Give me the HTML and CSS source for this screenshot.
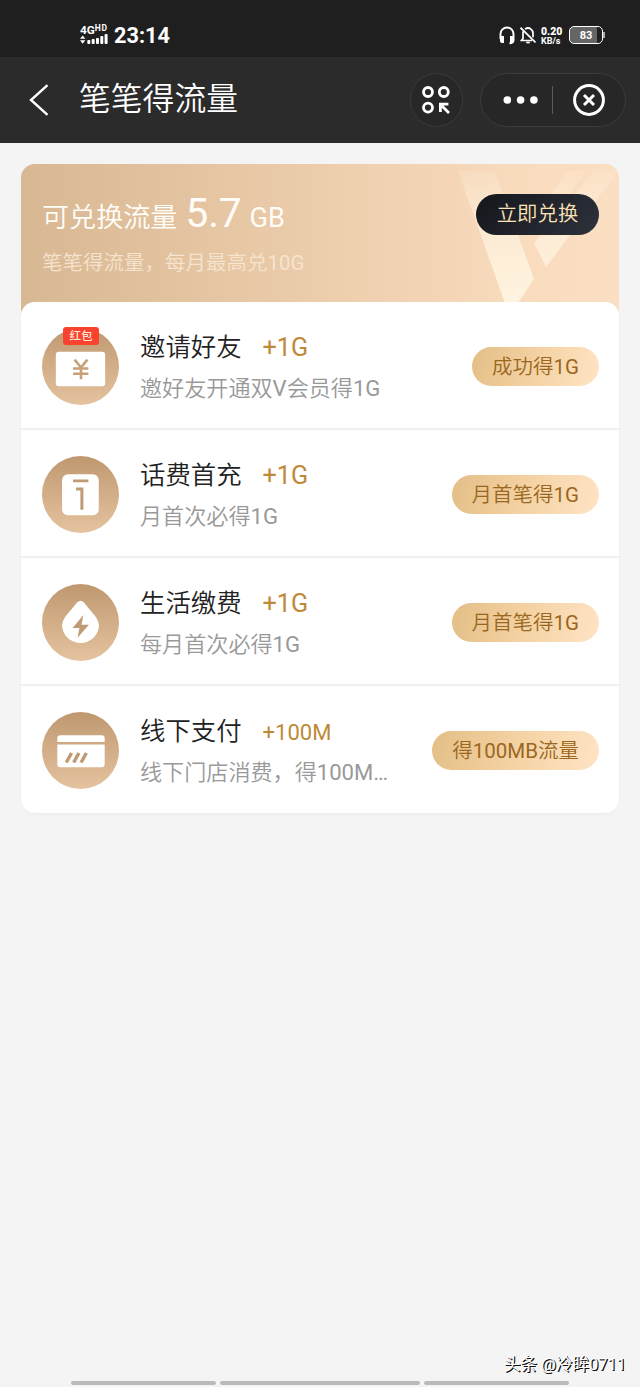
FILE: index.html
```html
<!DOCTYPE html>
<html lang="zh-CN">
<head>
<meta charset="utf-8">
<title>笔笔得流量</title>
<link rel="stylesheet" href="styles.css">
</head>
<body>
<div class="screen">
  <header class="top">
    <div class="status">
      <div class="network">
        <span class="net-type">4G<small>HD</small></span>
        <svg class="signal" width="28" height="11" viewBox="0 0 28 11" fill="#fff"><path d="M0 4.7 2.7 1.4 5.4 4.7ZM0 6.3H5.4L2.7 9.8Z"/><rect x="7.3" y="6" width="3" height="4" rx="1"/><rect x="11.7" y="5" width="3" height="5" rx="1"/><rect x="16" y="4" width="3" height="6" rx="1"/><rect x="20.3" y="2" width="3" height="8" rx="1"/><rect x="24.6" y="0" width="3" height="10" rx="1"/></svg>
      </div>
      <span class="clock">23:14</span>
      <div class="status-right">
        <svg width="16" height="19" viewBox="0 0 16 19" fill="none" stroke="#fff"><path stroke-width="2" d="M1.5 13V8A6.4 6.4 0 0 1 14.5 8V14Q14.5 17 10.5 17.3"/><path fill="#fff" stroke="none" d="M1 10H5V17H3Q1 17 1 15ZM11 10H15V15Q15 17 13 17H11Z"/></svg>
        <svg class="bell" width="16" height="19" viewBox="0 0 16 19" fill="none" stroke="#fff" stroke-width="1.7"><path d="M3 5.5V12.5L1.5 14.5H12M5 3.2Q8 .8 11 3.2Q13 4.6 13 7.5V11.2M.5 1.7 15.5 16.4"/><path d="M6.2 16.5H9.8"/></svg>
        <span class="rate"><b>0.20</b><i>KB/s</i></span>
        <div class="battery"><span>83</span></div>
      </div>
    </div>
    <nav class="navbar">
      <svg class="back" width="20" height="32" viewBox="0 0 20 32" fill="none" stroke="#fff" stroke-width="2.4"><path d="M18.5 1.2 2 16 18.5 30.8"/></svg>
      <h1 class="title">笔笔得流量</h1>
      <div class="round">
        <svg width="28" height="28" viewBox="0 0 28 28" fill="none" stroke="#fff" stroke-width="2.8"><circle cx="6" cy="6" r="4.5"/><circle cx="21.8" cy="6" r="4.5"/><circle cx="6" cy="21.6" r="4.5"/><path d="M18.4 26V18.2H26.4M19 19 27 27"/></svg>
      </div>
      <div class="capsule">
        <svg width="36" height="8" viewBox="0 0 36 8" fill="#fff"><circle cx="4.3" cy="4" r="3.8"/><circle cx="17.6" cy="4" r="3.8"/><circle cx="30.9" cy="4" r="3.8"/></svg>
        <span class="divider"></span>
        <svg width="34" height="34" viewBox="0 0 34 34" fill="none" stroke="#fff" stroke-width="3"><circle cx="17" cy="17" r="14.4"/><path d="m12 12 10 10M22 12 12 22"/></svg>
      </div>
    </nav>
  </header>

  <main class="card">
    <section class="hero">
      <svg class="emblem" width="165" height="139" viewBox="0 0 165 139">
        <defs><linearGradient id="v" x1="0" y1="0" x2="0" y2="139" gradientUnits="userSpaceOnUse"><stop stop-color="#fff3df" stop-opacity=".1"/><stop offset=".4" stop-color="#fff3df" stop-opacity=".6"/><stop offset="1" stop-color="#fff4e0"/></linearGradient></defs>
        <path fill="url(#v)" d="M4 7H41L80 115 64 139H51ZM114 7H131L95 61H74ZM140 7H164L92 103 80 79Z"/>
      </svg>
      <div class="hero-text">
        <p class="balance">可兑换流量 <strong>5.7</strong> GB</p>
        <p class="rule">笔笔得流量，每月最高兑10G</p>
      </div>
      <button class="redeem">立即兑换</button>
    </section>
    <ul class="list">
      <li class="row">
        <div class="icon">
          <svg width="78" height="78" viewBox="0 0 78 78"><rect x="14" y="24" width="50" height="35" rx="3" fill="#fff"/><path d="m33 32 6.5 8 6.5-8M39.5 39V52M31.5 41H47M31.5 46.4H47" fill="none" stroke="#c6a078" stroke-width="2.6"/></svg>
          <span class="tag">红包</span>
        </div>
        <div class="info"><p class="name">邀请好友<em>+1G</em></p><p class="desc">邀好友开通双V会员得1G</p></div>
        <button class="action">成功得1G</button>
      </li>
      <li class="row">
        <div class="icon">
          <svg width="78" height="78" viewBox="0 0 78 78"><rect x="20.3" y="18.5" width="37.2" height="41.5" rx="6" fill="#fff"/><path d="M31.5 25.2H47M34.5 33.4H40.4V54.5" fill="none" stroke="#c09a72" stroke-width="3"/></svg>
        </div>
        <div class="info"><p class="name">话费首充<em>+1G</em></p><p class="desc">月首次必得1G</p></div>
        <button class="action">月首笔得1G</button>
      </li>
      <li class="row">
        <div class="icon">
          <svg width="78" height="78" viewBox="0 0 78 78"><path d="M35.8 18.5Q39 15.2 42.2 18.5L53 31.3Q58 37.5 57.6 43A18.7 18.7 0 0 1 20.4 43Q20 37.5 25 31.3Z" fill="#fff"/><path d="M42 31.5 31 44.5H38L36 54.5 47.5 41.2H40Z" fill="#c09a72"/></svg>
        </div>
        <div class="info"><p class="name">生活缴费<em>+1G</em></p><p class="desc">每月首次必得1G</p></div>
        <button class="action">月首笔得1G</button>
      </li>
      <li class="row">
        <div class="icon">
          <svg width="78" height="78" viewBox="0 0 78 78"><path d="M15.5 30.4V26.5Q15.5 23.5 18.5 23.5H60.5Q63.5 23.5 63.5 26.5V30.4ZM15.5 33H63.5V53Q63.5 56 60.5 56H18.5Q15.5 56 15.5 53Z" fill="#fff"/><path d="M24.6 51.2 29.9 41.5M32.1 51.2 37.4 41.5M39.6 51.2 44.9 41.5" stroke="#c09a72" stroke-width="3.5"/></svg>
        </div>
        <div class="info"><p class="name">线下支付<em class="small">+100M</em></p><p class="desc">线下门店消费，得100M…</p></div>
        <button class="action">得100MB流量</button>
      </li>
    </ul>
  </main>

  <footer class="bottom">
    <p class="author">头条 @冷眸0711</p>
    <div class="handles"><span class="side"></span><span class="middle"></span><span class="side"></span></div>
  </footer>
</div>
</body>
</html>
```

FILE: styles.css
```css
* { box-sizing: border-box; }
body, h1, p, ul { margin: 0; padding: 0; }
body { background: #f4f4f4; font-family: Roboto, "Noto Sans CJK SC DemiLight", "Noto Sans CJK SC", sans-serif; }
button { border: 0; font-family: inherit; white-space: nowrap; }
svg { display: block; flex: none; }

.screen { display: flex; flex-direction: column; width: 640px; height: 1387px; overflow: hidden; }
.top { flex: none; color: #fff; }

.status { display: flex; height: 57px; padding: 23px 34px 0 80px; background: #1f1f1f; }
.network { width: 28px; margin-right: 6px; padding-top: 2px; }
.net-type { display: flex; height: 9px; font-size: 11.8px; font-weight: 700; line-height: 10px; }
.net-type small { font-size: 8.5px; line-height: 7px; letter-spacing: .6px; }
.clock { font-size: 21.7px; font-weight: 700; line-height: 25px; }
.status-right { display: flex; margin-left: auto; padding-top: 3px; }
.bell { margin-left: 5px; }
.rate { display: flex; flex-direction: column; width: 22px; margin-left: 5px; font-weight: 700; white-space: nowrap; }
.rate b { font-size: 10.5px; line-height: 11px; }
.rate i { font-size: 9px; font-style: normal; line-height: 9px; }
.battery { display: flex; width: 37px; height: 19px; margin-left: 6px; }
.battery span { width: 34px; height: 18px; border: 1.5px solid #fff; border-radius: 5px; background: linear-gradient(90deg, #656565 84%, #1f1f1f 84%); background-clip: padding-box; font-size: 11px; font-weight: 700; line-height: 17px; text-align: center; }
.battery::after { content: ""; width: 2px; height: 6px; margin-top: 6px; background: #aaa; }

.navbar { display: flex; align-items: center; height: 86px; padding: 0 14px 1px 29px; background: #2b2b2b; }
.title { margin: -1px 0 0 30px; font-size: 31.8px; font-weight: 350; line-height: 44px; }
.round, .capsule { display: flex; align-items: center; border: 1px solid #3b3b3b; background: #272727; }
.round { justify-content: center; width: 53px; height: 54px; margin-left: auto; padding-right: 2px; border-radius: 27px; }
.capsule { width: 146px; height: 54px; margin-left: 17px; padding-left: 22px; border-radius: 27px; }
.divider { width: 1px; height: 28px; margin: 0 19px 0 13px; background: #5b5b5b; }

.card { width: 597.5px; margin: 21px 0 0 21px; }
.hero { position: relative; display: flex; justify-content: space-between; height: 152px; padding: 30px 19.5px 0 21px; border-radius: 14px 14px 0 0; background: linear-gradient(90deg, #d8b793, #e4c4a0 28%, #f0d1b1 60%, #f9dcbe 85%, #fbdfc3); }
.emblem { position: absolute; top: 0; right: 0; width: 165px; height: 139px; }
.hero-text { color: #fffdf8; }
.balance { height: 42px; font-size: 27.1px; line-height: 39px; white-space: nowrap; word-spacing: 1.2px; }
.balance strong { font-size: 40.5px; font-weight: 400; }
.rule { margin-top: 13px; color: #f5e4cf; font-size: 20.5px; line-height: 29px; }
.redeem { position: relative; width: 123px; height: 41px; border-radius: 21px; background: linear-gradient(135deg, #14161b, #2e323c); color: #fce3b9; font-size: 20.4px; line-height: 36px; padding-bottom: 3px; }

.list { position: relative; margin-top: -14px; border-radius: 14px; background: #fff; box-shadow: 0 1px 2px #ececec; list-style: none; }
.row { display: flex; height: 128px; padding: 26px 19.5px 0 21px; border-bottom: 2px solid #efefef; }
.row:last-child { height: 127px; border-bottom: 0; }
.icon { position: relative; width: 77px; height: 77px; margin-right: 21px; border-radius: 50%; background: linear-gradient(#bf9870, #e5c39f); }
.icon svg { width: 77px; height: 77px; }
.tag { position: absolute; top: -1px; left: 21px; width: 36px; height: 18px; border-radius: 3px; background: #f9432e; color: #ffe7d8; font-family: "Noto Sans CJK SC", sans-serif; font-size: 11.5px; font-weight: 500; line-height: 17px; text-align: center; }
.name { height: 38px; color: #222; font-size: 25.4px; line-height: 38px; white-space: nowrap; }
.name em { margin-left: 21px; color: #be8a37; font-size: 25.2px; font-style: normal; }
.name .small { font-size: 22px; }
.desc { margin-top: 6px; color: #999; font-size: 22.1px; line-height: 33px; white-space: nowrap; }
.action { height: 39px; margin: 19px 0 0 auto; padding: 1px 20px 0; border-radius: 20px; background: linear-gradient(105deg, #e3be86, #f4d2a3 50%, #ffe4c5); color: #9a6720; font-size: 20.5px; line-height: 38px; }

.bottom { margin-top: auto; }
.author { padding-right: 14px; color: #fff; font-family: Roboto, "Noto Sans CJK SC", sans-serif; font-size: 16.5px; line-height: 25px; text-align: right; text-shadow: 1px 1px 0 #111, 1px 1px 0 #222; }
.handles { display: flex; gap: 4px; margin: 4px 0 2px 71px; }
.handles span { height: 4px; border-radius: 2px; background: #bababa; }
.side { width: 145px; }
.middle { width: 200px; }
```
